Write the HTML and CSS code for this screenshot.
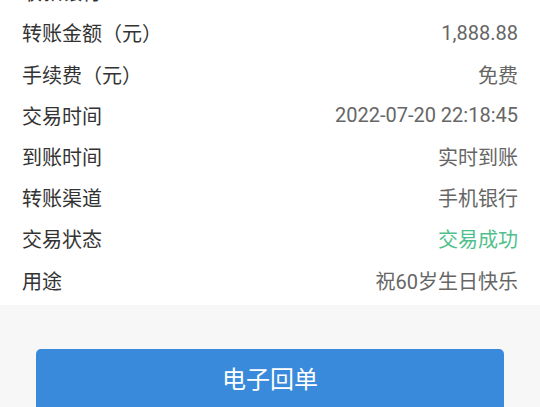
FILE: index.html
```html
<!DOCTYPE html>
<html lang="zh-CN">
<head>
<meta charset="utf-8">
<title>转账详情</title>
<link rel="stylesheet" href="styles.css">
</head>
<body>
<div class="page">
  <section class="details">
    <div class="row"><span class="label">收款银行</span><span class="value"></span></div>
    <div class="row"><span class="label">转账金额（元）</span><span class="value">1,888.88</span></div>
    <div class="row"><span class="label">手续费（元）</span><span class="value">免费</span></div>
    <div class="row"><span class="label">交易时间</span><span class="value">2022-07-20 22:18:45</span></div>
    <div class="row"><span class="label">到账时间</span><span class="value">实时到账</span></div>
    <div class="row"><span class="label">转账渠道</span><span class="value">手机银行</span></div>
    <div class="row"><span class="label">交易状态</span><span class="value success">交易成功</span></div>
    <div class="row"><span class="label">用途</span><span class="value">祝60岁生日快乐</span></div>
  </section>
  <div class="actions">
    <button class="btn-primary" type="button">电子回单</button>
  </div>
</div>
</body>
</html>
```
FILE: styles.css
```css
html, body {
  margin: 0;
  padding: 0;
}
body {
  background: #f7f7f7;
  font-family: Roboto, "Noto Sans CJK SC", sans-serif;
  overflow: hidden;
}
.page {
  width: 540px;
}
.details {
  background: #ffffff;
  margin-top: -28.8px;
  padding: 0 22px 4.4px 22px;
}
.row {
  display: flex;
  justify-content: space-between;
  align-items: center;
  height: 41.2px;
  font-size: 20px;
}
.label {
  color: #333333;
}
.value {
  color: #666666;
}
.value.success {
  color: #4fbf8c;
}
.actions {
  padding: 44px 36px 0 36px;
}
.btn-primary {
  display: block;
  width: 100%;
  height: 66px;
  border: none;
  border-radius: 5px;
  background: #3a8adb;
  color: #ffffff;
  font-family: "Noto Sans CJK SC", sans-serif;
  font-size: 24px;
  padding: 0 0 9px 0;
}
```
